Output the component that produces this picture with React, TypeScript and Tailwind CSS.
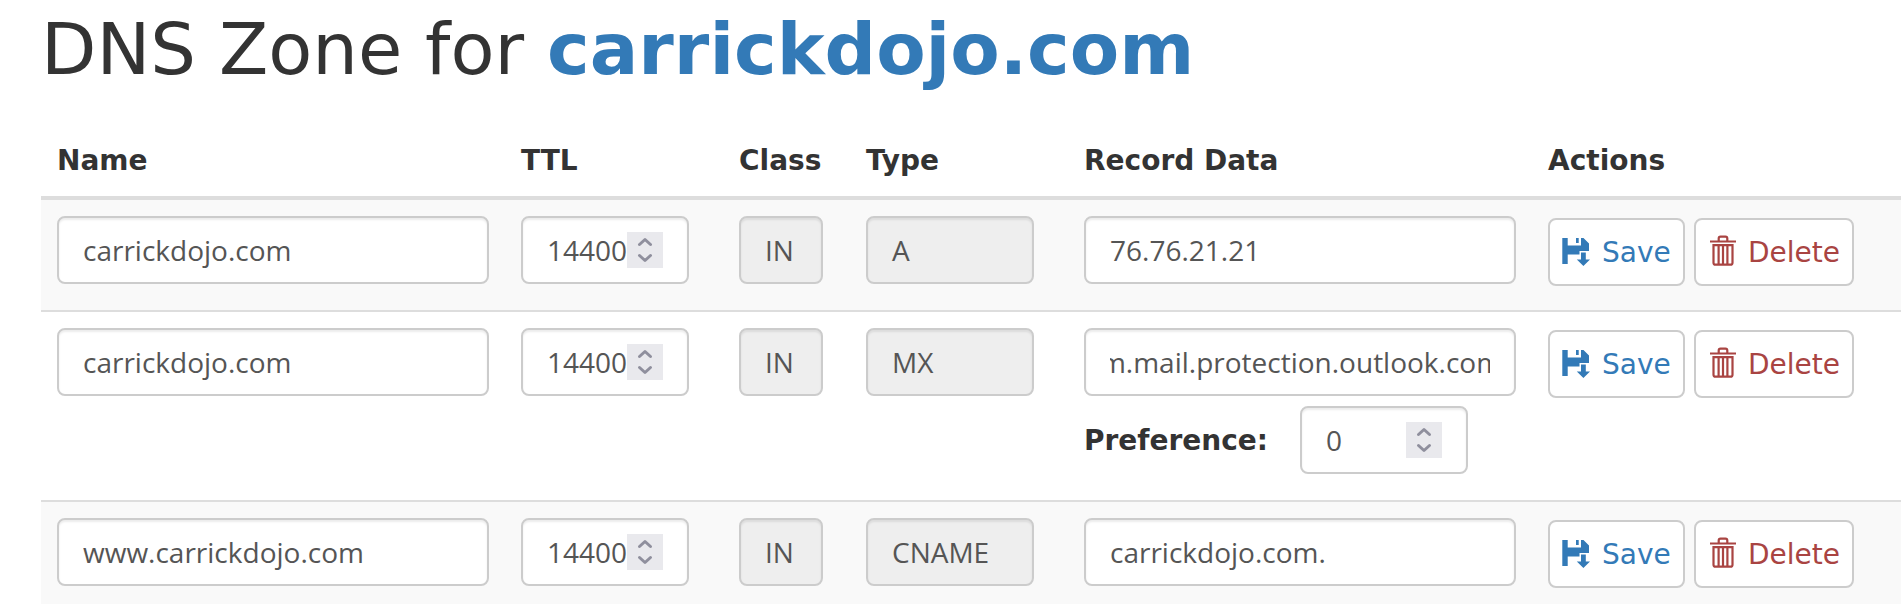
import type { ReactNode } from "react";

const body = "font-['DejaVu_Sans',sans-serif]";
const control =
  "flex h-[68px] items-center rounded-[8px] border-2 border-[#ccc] px-6 font-['Open_Sans',sans-serif] text-[28px] leading-[40px] text-[#555] shadow-[inset_0_2px_2px_rgba(0,0,0,0.075)]";

function Spinner() {
  return (
    <span className="grid h-9 w-9 shrink-0 place-items-center bg-[#e9e9ed]">
      <svg width="36" height="36" viewBox="0 0 36 36" fill="none" stroke="#8f8f9d" strokeWidth="3" strokeLinecap="round" strokeLinejoin="round">
        <path d="M12.500 12.500 18 7.500l5.500 5M12.500 23.500l5.500 5 5.500-5" />
      </svg>
    </span>
  );
}

function TextField({ value, clipped }: { value: string; clipped?: boolean }) {
  return (
    <div className={`${control} w-[432px] bg-white`}>
      <div className={`flex w-full overflow-hidden whitespace-nowrap ${clipped ? "justify-center" : ""}`}>
        <span className={`shrink-0 ${clipped ? "pl-[2px]" : ""}`}>{value}</span>
      </div>
    </div>
  );
}

function NumberField({ value }: { value: string }) {
  return (
    <div className={`${control} w-[168px] justify-between bg-white`}>
      <span>{value}</span>
      <Spinner />
    </div>
  );
}

function SaveIcon() {
  return (
    <svg className="shrink-0" width="28" height="28" viewBox="0 0 28 28" fill="#337ab7">
      <path d="M.3 0h5.400v7.500H19V0h2.500L27 5.500V13H17.500v3.500H5.700V26H.3zM14 0h2.700v5H14z" />
      <path d="M19 14.500h4.800v7H28L21.400 28 14.800 21.500H19z" />
    </svg>
  );
}

function TrashIcon() {
  return (
    <svg className="mb-[3px] shrink-0" width="26" height="31" viewBox="0 0 26 31" fill="none" stroke="#a94442" strokeWidth="2.200">
      <path d="M0 6.500h26M8.700 6V3.500Q8.700 1.600 10.500 1.600h5q1.800 0 1.800 1.900V6M3.500 10.200v17.500q0 2 2 2h15q2 0 2-2V10.200zM8.600 10.200v19M13 10.200v19M17.400 10.200v19" />
    </svg>
  );
}

function Button({ className, children }: { className: string; children: ReactNode }) {
  return (
    <button className={`flex h-[68px] items-center rounded-[8px] border-2 border-[#ccc] bg-white text-[28px] leading-[40px] ${className}`}>
      {children}
    </button>
  );
}

type DnsRecord = { name: string; type: string; data: string; preference?: string };

const records: DnsRecord[] = [
  { name: "carrickdojo.com", type: "A", data: "76.76.21.21" },
  { name: "carrickdojo.com", type: "MX", data: "m.mail.protection.outlook.com", preference: "0" },
  { name: "www.carrickdojo.com", type: "CNAME", data: "carrickdojo.com." },
];

const columns = "grid grid-cols-[464px_218px_127px_218px_464px_1fr] px-4";

function RecordRow({ record, first, striped }: { record: DnsRecord; first: boolean; striped: boolean }) {
  return (
    <div className={`${columns} items-start pt-4 ${first ? "h-[110px]" : "border-t-2 border-[#ddd]"} ${record.preference ? "h-[190px]" : first ? "" : "h-[112px]"} ${striped ? "bg-[#f9f9f9]" : "bg-white"}`}>
      <TextField value={record.name} />
      <NumberField value="14400" />
      <div className={`${control} w-[84px] bg-[#eee]`}>IN</div>
      <div className={`${control} w-[168px] bg-[#eee]`}>{record.type}</div>
      <div className="flex flex-col gap-[10px]">
        <TextField value={record.data} clipped={record.preference !== undefined} />
        {record.preference && (
          <div className="flex w-[384px] items-center justify-between">
            <span className="pt-[2px] text-[28px] leading-[40px] font-bold">Preference:</span>
            <NumberField value={record.preference} />
          </div>
        )}
      </div>
      <div className="flex gap-[9px] pt-[2px]">
        <Button className="w-[137px] gap-3 pl-3 text-[#337ab7]">
          <SaveIcon />
          <span className="pt-[2px]">Save</span>
        </Button>
        <Button className="w-[160px] gap-3 pl-[14px] text-[#a94442]">
          <TrashIcon />
          <span className="pt-[2px]">Delete</span>
        </Button>
      </div>
    </div>
  );
}

export default function App() {
  return (
    <div className={`${body} h-[604px] overflow-hidden bg-white pr-[2px] pl-[41px] text-[#333]`}>
      <h1 className="flex h-[124px] items-start gap-[23px] pt-[10px] text-[72px] leading-[79px] font-normal whitespace-nowrap">
        <span>DNS Zone for</span>
        <strong className="font-bold text-[#337ab7]">carrickdojo.com</strong>
      </h1>
      <div className={`${columns} h-[76px] border-b-4 border-[#ddd] pt-[17px] text-[28px] leading-[40px] font-bold`}>
        <div>Name</div>
        <div>TTL</div>
        <div>Class</div>
        <div>Type</div>
        <div>Record Data</div>
        <div>Actions</div>
      </div>
      {records.map((record, i) => (
        <RecordRow key={i} record={record} first={i === 0} striped={i % 2 === 0} />
      ))}
    </div>
  );
}
